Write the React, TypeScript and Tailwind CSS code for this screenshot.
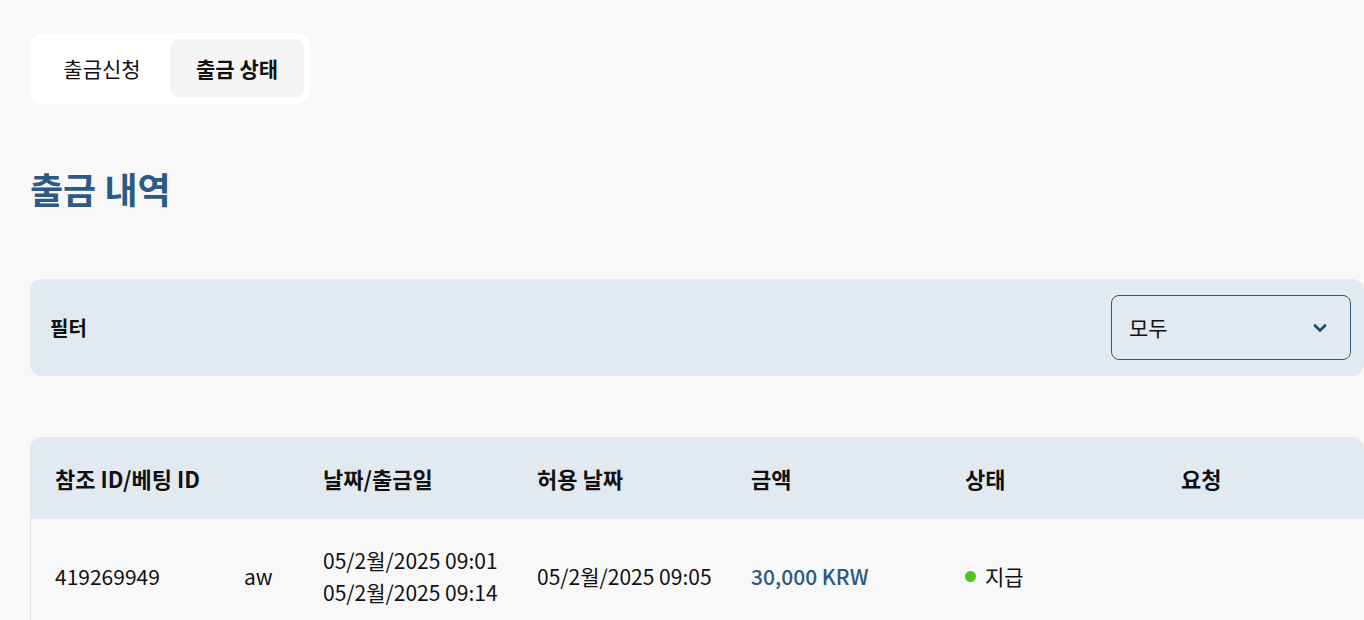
import { ChevronDown } from 'lucide-react'

const font = { fontFamily: '"Noto Sans CJK KR", "Noto Sans", sans-serif' }

export default function App() {
  return (
    <div className="min-h-[620px] bg-[#f8f8f8] pl-[30px] pt-[33px] text-[#111]" style={font}>
      <div className="inline-flex gap-[2px] rounded-[14px] bg-white p-[6px]">
        <button className="h-[59px] w-[132px] rounded-[10px] text-[21px] text-[#111]">출금신청</button>
        <button className="h-[59px] w-[134px] rounded-[10px] bg-[#f5f5f5] text-[21px] font-bold text-[#111]">
          출금 상태
        </button>
      </div>

      <h1 className="mt-[60px] text-[36px] font-bold leading-[48px] text-[#2b5a84]">출금 내역</h1>

      <div className="mt-[67px] flex h-[97px] items-center justify-between rounded-[12px] bg-[#e1e9f1] pl-[20px] pr-[13px]">
        <span className="text-[20px] font-bold">필터</span>
        <div className="flex h-[65px] w-[240px] items-center justify-between rounded-[8px] border border-[#2b5a80] pl-[17px] pr-[20px]">
          <span className="text-[21px]">모두</span>
          <ChevronDown className="h-[20px] w-[20px] text-[#1f4a6e]" strokeWidth={3.2} />
        </div>
      </div>

      <div className="mt-[61px] overflow-hidden rounded-t-[12px] border-l border-[#e3e3e3]">
        <div className="grid h-[82px] grid-cols-[188px_79px_214px_214px_214px_216px_1fr] items-center bg-[#e1e9f1] text-[22px] font-bold">
          <div className="col-span-2 pl-[24px]">참조 ID/베팅 ID</div>
          <div className="pl-[25px]">날짜/출금일</div>
          <div className="pl-[25px]">허용 날짜</div>
          <div className="pl-[25px]">금액</div>
          <div className="pl-[25px]">상태</div>
          <div className="pl-[25px]">요청</div>
        </div>
        <div className="grid grid-cols-[188px_79px_214px_214px_214px_216px_1fr] items-center py-[25px] text-[21px] leading-[32px]">
          <div className="pl-[24px]">419269949</div>
          <div className="pl-[25px]">aw</div>
          <div className="pl-[25px]">
            <div>05/2월/2025 09:01</div>
            <div>05/2월/2025 09:14</div>
          </div>
          <div className="pl-[25px]">05/2월/2025 09:05</div>
          <div className="pl-[25px] font-medium text-[#2b5a84]">30,000 KRW</div>
          <div className="flex items-center gap-[9px] pl-[25px]">
            <span className="h-[11px] w-[11px] rounded-full bg-[#52c41a]" />
            <span>지급</span>
          </div>
          <div />
        </div>
      </div>
    </div>
  )
}
